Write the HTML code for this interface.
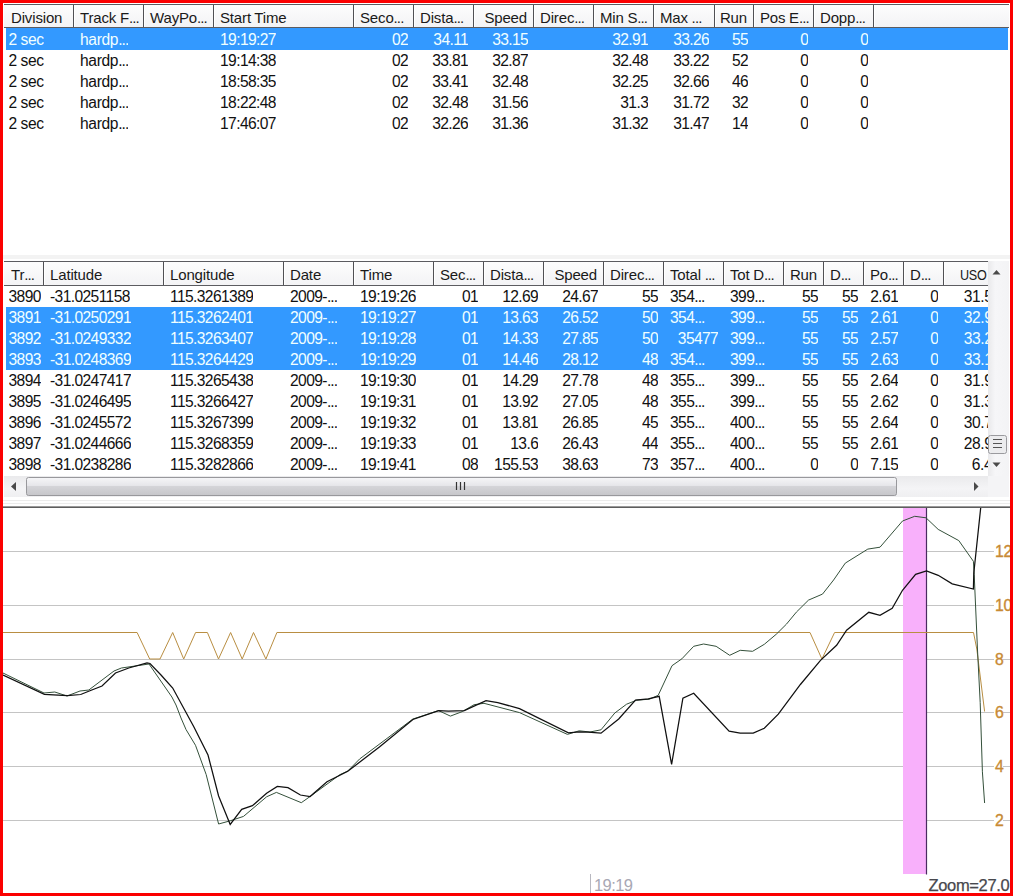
<!DOCTYPE html><html><head><meta charset="utf-8"><style>
*{margin:0;padding:0;box-sizing:border-box}
html,body{width:1013px;height:896px;overflow:hidden;background:#fb0000}
body{position:relative;font-family:"Liberation Sans",sans-serif;font-size:15.6px;color:#111;letter-spacing:-0.35px;word-spacing:-0.3px}
.a{position:absolute}
.c{position:absolute;height:21px;line-height:21px;white-space:nowrap;overflow:hidden}
.h{position:absolute;height:23px;line-height:23px;white-space:nowrap;color:#1a1a1a;font-size:15px;letter-spacing:-0.15px}
.sel{color:#f0ffff}
.n{letter-spacing:-0.6px}
.d{letter-spacing:-0.9px}
</style></head><body>
<div class="a" style="left:3px;top:3px;width:1007px;height:890px;background:#fff"></div>
<div class="a" style="left:4px;top:4px;width:1005px;height:24px;background:linear-gradient(#fdfdfd,#f3f3f5);border-top:1px solid #5c5c60;border-bottom:1px solid #5c5c60"></div>
<div class="a" style="left:73px;top:5px;width:1px;height:22px;background:#505054"></div>
<div class="a" style="left:74px;top:5px;width:1px;height:22px;background:#fff"></div>
<div class="a" style="left:143px;top:5px;width:1px;height:22px;background:#505054"></div>
<div class="a" style="left:144px;top:5px;width:1px;height:22px;background:#fff"></div>
<div class="a" style="left:213px;top:5px;width:1px;height:22px;background:#505054"></div>
<div class="a" style="left:214px;top:5px;width:1px;height:22px;background:#fff"></div>
<div class="a" style="left:353px;top:5px;width:1px;height:22px;background:#505054"></div>
<div class="a" style="left:354px;top:5px;width:1px;height:22px;background:#fff"></div>
<div class="a" style="left:413px;top:5px;width:1px;height:22px;background:#505054"></div>
<div class="a" style="left:414px;top:5px;width:1px;height:22px;background:#fff"></div>
<div class="a" style="left:473px;top:5px;width:1px;height:22px;background:#505054"></div>
<div class="a" style="left:474px;top:5px;width:1px;height:22px;background:#fff"></div>
<div class="a" style="left:533px;top:5px;width:1px;height:22px;background:#505054"></div>
<div class="a" style="left:534px;top:5px;width:1px;height:22px;background:#fff"></div>
<div class="a" style="left:593px;top:5px;width:1px;height:22px;background:#505054"></div>
<div class="a" style="left:594px;top:5px;width:1px;height:22px;background:#fff"></div>
<div class="a" style="left:653px;top:5px;width:1px;height:22px;background:#505054"></div>
<div class="a" style="left:654px;top:5px;width:1px;height:22px;background:#fff"></div>
<div class="a" style="left:714px;top:5px;width:1px;height:22px;background:#505054"></div>
<div class="a" style="left:715px;top:5px;width:1px;height:22px;background:#fff"></div>
<div class="a" style="left:753px;top:5px;width:1px;height:22px;background:#505054"></div>
<div class="a" style="left:754px;top:5px;width:1px;height:22px;background:#fff"></div>
<div class="a" style="left:813px;top:5px;width:1px;height:22px;background:#505054"></div>
<div class="a" style="left:814px;top:5px;width:1px;height:22px;background:#fff"></div>
<div class="a" style="left:873px;top:5px;width:1px;height:22px;background:#505054"></div>
<div class="a" style="left:874px;top:5px;width:1px;height:22px;background:#fff"></div>
<div class="h" style="left:11px;top:5.5px">Division</div>
<div class="h" style="left:80px;top:5.5px">Track F<span class="d">...</span></div>
<div class="h" style="left:150px;top:5.5px">WayPo<span class="d">...</span></div>
<div class="h" style="left:220px;top:5.5px">Start Time</div>
<div class="h" style="left:360px;top:5.5px">Seco<span class="d">...</span></div>
<div class="h" style="left:420px;top:5.5px">Dista<span class="d">...</span></div>
<div class="h" style="right:486px;top:5.5px">Speed</div>
<div class="h" style="left:540px;top:5.5px">Direc<span class="d">...</span></div>
<div class="h" style="left:600px;top:5.5px">Min S<span class="d">...</span></div>
<div class="h" style="left:660px;top:5.5px">Max <span class="d">...</span></div>
<div class="h" style="right:266px;top:5.5px">Run</div>
<div class="h" style="left:760px;top:5.5px">Pos E<span class="d">...</span></div>
<div class="h" style="left:820px;top:5.5px">Dopp<span class="d">...</span></div>
<div class="a" style="left:6px;top:29px;width:1002px;height:21px;background:#3399ff"></div>
<div class="c sel" style="left:8.5px;top:29px">2 sec</div>
<div class="c sel" style="left:80px;top:29px">hardp<span class="d">...</span></div>
<div class="c sel n" style="left:220px;top:29px">19:19:27</div>
<div class="c sel n" style="right:604.8px;top:29px">02</div>
<div class="c sel n" style="right:544.8px;top:29px">34.11</div>
<div class="c sel n" style="right:484.8px;top:29px">33.15</div>
<div class="c sel n" style="right:364.8px;top:29px">32.91</div>
<div class="c sel n" style="right:303.8px;top:29px">33.26</div>
<div class="c sel n" style="right:264.8px;top:29px">55</div>
<div class="c sel n" style="right:204.8px;top:29px">0</div>
<div class="c sel n" style="right:144.8px;top:29px">0</div>
<div class="c" style="left:8.5px;top:50px">2 sec</div>
<div class="c" style="left:80px;top:50px">hardp<span class="d">...</span></div>
<div class="c n" style="left:220px;top:50px">19:14:38</div>
<div class="c n" style="right:604.8px;top:50px">02</div>
<div class="c n" style="right:544.8px;top:50px">33.81</div>
<div class="c n" style="right:484.8px;top:50px">32.87</div>
<div class="c n" style="right:364.8px;top:50px">32.48</div>
<div class="c n" style="right:303.8px;top:50px">33.22</div>
<div class="c n" style="right:264.8px;top:50px">52</div>
<div class="c n" style="right:204.8px;top:50px">0</div>
<div class="c n" style="right:144.8px;top:50px">0</div>
<div class="c" style="left:8.5px;top:71px">2 sec</div>
<div class="c" style="left:80px;top:71px">hardp<span class="d">...</span></div>
<div class="c n" style="left:220px;top:71px">18:58:35</div>
<div class="c n" style="right:604.8px;top:71px">02</div>
<div class="c n" style="right:544.8px;top:71px">33.41</div>
<div class="c n" style="right:484.8px;top:71px">32.48</div>
<div class="c n" style="right:364.8px;top:71px">32.25</div>
<div class="c n" style="right:303.8px;top:71px">32.66</div>
<div class="c n" style="right:264.8px;top:71px">46</div>
<div class="c n" style="right:204.8px;top:71px">0</div>
<div class="c n" style="right:144.8px;top:71px">0</div>
<div class="c" style="left:8.5px;top:92px">2 sec</div>
<div class="c" style="left:80px;top:92px">hardp<span class="d">...</span></div>
<div class="c n" style="left:220px;top:92px">18:22:48</div>
<div class="c n" style="right:604.8px;top:92px">02</div>
<div class="c n" style="right:544.8px;top:92px">32.48</div>
<div class="c n" style="right:484.8px;top:92px">31.56</div>
<div class="c n" style="right:364.8px;top:92px">31.3</div>
<div class="c n" style="right:303.8px;top:92px">31.72</div>
<div class="c n" style="right:264.8px;top:92px">32</div>
<div class="c n" style="right:204.8px;top:92px">0</div>
<div class="c n" style="right:144.8px;top:92px">0</div>
<div class="c" style="left:8.5px;top:113px">2 sec</div>
<div class="c" style="left:80px;top:113px">hardp<span class="d">...</span></div>
<div class="c n" style="left:220px;top:113px">17:46:07</div>
<div class="c n" style="right:604.8px;top:113px">02</div>
<div class="c n" style="right:544.8px;top:113px">32.26</div>
<div class="c n" style="right:484.8px;top:113px">31.36</div>
<div class="c n" style="right:364.8px;top:113px">31.32</div>
<div class="c n" style="right:303.8px;top:113px">31.47</div>
<div class="c n" style="right:264.8px;top:113px">14</div>
<div class="c n" style="right:204.8px;top:113px">0</div>
<div class="c n" style="right:144.8px;top:113px">0</div>
<div class="a" style="left:6px;top:28px;width:1002px;height:1px;background:#3399ff"></div>
<div class="a" style="left:3px;top:255px;width:1007px;height:4px;background:#f3f3f3"></div>
<div class="a" style="left:4px;top:261px;width:984px;height:25px;background:linear-gradient(#fdfdfd,#f3f3f5);border-top:1px solid #5c5c60;border-bottom:1px solid #5c5c60"></div>
<div class="a" style="left:43px;top:262px;width:1px;height:23px;background:#505054"></div>
<div class="a" style="left:44px;top:262px;width:1px;height:23px;background:#fff"></div>
<div class="a" style="left:163px;top:262px;width:1px;height:23px;background:#505054"></div>
<div class="a" style="left:164px;top:262px;width:1px;height:23px;background:#fff"></div>
<div class="a" style="left:283px;top:262px;width:1px;height:23px;background:#505054"></div>
<div class="a" style="left:284px;top:262px;width:1px;height:23px;background:#fff"></div>
<div class="a" style="left:353px;top:262px;width:1px;height:23px;background:#505054"></div>
<div class="a" style="left:354px;top:262px;width:1px;height:23px;background:#fff"></div>
<div class="a" style="left:433px;top:262px;width:1px;height:23px;background:#505054"></div>
<div class="a" style="left:434px;top:262px;width:1px;height:23px;background:#fff"></div>
<div class="a" style="left:483px;top:262px;width:1px;height:23px;background:#505054"></div>
<div class="a" style="left:484px;top:262px;width:1px;height:23px;background:#fff"></div>
<div class="a" style="left:543px;top:262px;width:1px;height:23px;background:#505054"></div>
<div class="a" style="left:544px;top:262px;width:1px;height:23px;background:#fff"></div>
<div class="a" style="left:603px;top:262px;width:1px;height:23px;background:#505054"></div>
<div class="a" style="left:604px;top:262px;width:1px;height:23px;background:#fff"></div>
<div class="a" style="left:663px;top:262px;width:1px;height:23px;background:#505054"></div>
<div class="a" style="left:664px;top:262px;width:1px;height:23px;background:#fff"></div>
<div class="a" style="left:723px;top:262px;width:1px;height:23px;background:#505054"></div>
<div class="a" style="left:724px;top:262px;width:1px;height:23px;background:#fff"></div>
<div class="a" style="left:783px;top:262px;width:1px;height:23px;background:#505054"></div>
<div class="a" style="left:784px;top:262px;width:1px;height:23px;background:#fff"></div>
<div class="a" style="left:823px;top:262px;width:1px;height:23px;background:#505054"></div>
<div class="a" style="left:824px;top:262px;width:1px;height:23px;background:#fff"></div>
<div class="a" style="left:863px;top:262px;width:1px;height:23px;background:#505054"></div>
<div class="a" style="left:864px;top:262px;width:1px;height:23px;background:#fff"></div>
<div class="a" style="left:903px;top:262px;width:1px;height:23px;background:#505054"></div>
<div class="a" style="left:904px;top:262px;width:1px;height:23px;background:#fff"></div>
<div class="a" style="left:943px;top:262px;width:1px;height:23px;background:#505054"></div>
<div class="a" style="left:944px;top:262px;width:1px;height:23px;background:#fff"></div>
<div class="h" style="left:11px;top:262.5px">Tr<span class="d">...</span></div>
<div class="h" style="left:50px;top:262.5px">Latitude</div>
<div class="h" style="left:170px;top:262.5px">Longitude</div>
<div class="h" style="left:290px;top:262.5px">Date</div>
<div class="h" style="left:360px;top:262.5px">Time</div>
<div class="h" style="left:440px;top:262.5px">Sec<span class="d">...</span></div>
<div class="h" style="left:490px;top:262.5px">Dista<span class="d">...</span></div>
<div class="h" style="right:416px;top:262.5px">Speed</div>
<div class="h" style="left:610px;top:262.5px">Direc<span class="d">...</span></div>
<div class="h" style="left:670px;top:262.5px">Total <span class="d">...</span></div>
<div class="h" style="left:730px;top:262.5px">Tot D<span class="d">...</span></div>
<div class="h" style="right:196px;top:262.5px">Run</div>
<div class="h" style="left:830px;top:262.5px">D<span class="d">...</span></div>
<div class="h" style="left:870px;top:262.5px">Po<span class="d">...</span></div>
<div class="h" style="left:910px;top:262.5px">D<span class="d">...</span></div>
<div class="h" style="left:960px;top:262.5px;transform:scaleX(0.84);transform-origin:0 0;letter-spacing:-0.3px">USO</div>
<div class="c n" style="left:8.5px;top:286px">3890</div>
<div class="c n" style="left:50px;top:286px">-31.0251158</div>
<div class="c n" style="left:170px;top:286px">115.3261389</div>
<div class="c n" style="left:290px;top:286px">2009-<span class="d">...</span></div>
<div class="c n" style="left:360px;top:286px">19:19:26</div>
<div class="c n" style="right:534.8px;top:286px">01</div>
<div class="c n" style="right:474.8px;top:286px">12.69</div>
<div class="c n" style="right:414.8px;top:286px">24.67</div>
<div class="c n" style="right:354.8px;top:286px">55</div>
<div class="c n" style="left:670px;top:286px">354<span class="d">...</span></div>
<div class="c n" style="left:730px;top:286px">399<span class="d">...</span></div>
<div class="c n" style="right:194.8px;top:286px">55</div>
<div class="c n" style="right:154.8px;top:286px">55</div>
<div class="c n" style="right:114.8px;top:286px">2.61</div>
<div class="c n" style="right:74.8px;top:286px">0</div>
<div class="a" style="left:6px;top:307px;width:982px;height:21px;background:#3399ff"></div>
<div class="c sel n" style="left:8.5px;top:307px">3891</div>
<div class="c sel n" style="left:50px;top:307px">-31.0250291</div>
<div class="c sel n" style="left:170px;top:307px">115.3262401</div>
<div class="c sel n" style="left:290px;top:307px">2009-<span class="d">...</span></div>
<div class="c sel n" style="left:360px;top:307px">19:19:27</div>
<div class="c sel n" style="right:534.8px;top:307px">01</div>
<div class="c sel n" style="right:474.8px;top:307px">13.63</div>
<div class="c sel n" style="right:414.8px;top:307px">26.52</div>
<div class="c sel n" style="right:354.8px;top:307px">50</div>
<div class="c sel n" style="left:670px;top:307px">354<span class="d">...</span></div>
<div class="c sel n" style="left:730px;top:307px">399<span class="d">...</span></div>
<div class="c sel n" style="right:194.8px;top:307px">55</div>
<div class="c sel n" style="right:154.8px;top:307px">55</div>
<div class="c sel n" style="right:114.8px;top:307px">2.61</div>
<div class="c sel n" style="right:74.8px;top:307px">0</div>
<div class="a" style="left:6px;top:328px;width:982px;height:21px;background:#3399ff"></div>
<div class="c sel n" style="left:8.5px;top:328px">3892</div>
<div class="c sel n" style="left:50px;top:328px">-31.0249332</div>
<div class="c sel n" style="left:170px;top:328px">115.3263407</div>
<div class="c sel n" style="left:290px;top:328px">2009-<span class="d">...</span></div>
<div class="c sel n" style="left:360px;top:328px">19:19:28</div>
<div class="c sel n" style="right:534.8px;top:328px">01</div>
<div class="c sel n" style="right:474.8px;top:328px">14.33</div>
<div class="c sel n" style="right:414.8px;top:328px">27.85</div>
<div class="c sel n" style="right:354.8px;top:328px">50</div>
<div class="c sel n" style="right:294.8px;top:328px">35477</div>
<div class="c sel n" style="left:730px;top:328px">399<span class="d">...</span></div>
<div class="c sel n" style="right:194.8px;top:328px">55</div>
<div class="c sel n" style="right:154.8px;top:328px">55</div>
<div class="c sel n" style="right:114.8px;top:328px">2.57</div>
<div class="c sel n" style="right:74.8px;top:328px">0</div>
<div class="a" style="left:6px;top:349px;width:982px;height:21px;background:#3399ff"></div>
<div class="c sel n" style="left:8.5px;top:349px">3893</div>
<div class="c sel n" style="left:50px;top:349px">-31.0248369</div>
<div class="c sel n" style="left:170px;top:349px">115.3264429</div>
<div class="c sel n" style="left:290px;top:349px">2009-<span class="d">...</span></div>
<div class="c sel n" style="left:360px;top:349px">19:19:29</div>
<div class="c sel n" style="right:534.8px;top:349px">01</div>
<div class="c sel n" style="right:474.8px;top:349px">14.46</div>
<div class="c sel n" style="right:414.8px;top:349px">28.12</div>
<div class="c sel n" style="right:354.8px;top:349px">48</div>
<div class="c sel n" style="left:670px;top:349px">354<span class="d">...</span></div>
<div class="c sel n" style="left:730px;top:349px">399<span class="d">...</span></div>
<div class="c sel n" style="right:194.8px;top:349px">55</div>
<div class="c sel n" style="right:154.8px;top:349px">55</div>
<div class="c sel n" style="right:114.8px;top:349px">2.63</div>
<div class="c sel n" style="right:74.8px;top:349px">0</div>
<div class="c n" style="left:8.5px;top:370px">3894</div>
<div class="c n" style="left:50px;top:370px">-31.0247417</div>
<div class="c n" style="left:170px;top:370px">115.3265438</div>
<div class="c n" style="left:290px;top:370px">2009-<span class="d">...</span></div>
<div class="c n" style="left:360px;top:370px">19:19:30</div>
<div class="c n" style="right:534.8px;top:370px">01</div>
<div class="c n" style="right:474.8px;top:370px">14.29</div>
<div class="c n" style="right:414.8px;top:370px">27.78</div>
<div class="c n" style="right:354.8px;top:370px">48</div>
<div class="c n" style="left:670px;top:370px">355<span class="d">...</span></div>
<div class="c n" style="left:730px;top:370px">399<span class="d">...</span></div>
<div class="c n" style="right:194.8px;top:370px">55</div>
<div class="c n" style="right:154.8px;top:370px">55</div>
<div class="c n" style="right:114.8px;top:370px">2.64</div>
<div class="c n" style="right:74.8px;top:370px">0</div>
<div class="c n" style="left:8.5px;top:391px">3895</div>
<div class="c n" style="left:50px;top:391px">-31.0246495</div>
<div class="c n" style="left:170px;top:391px">115.3266427</div>
<div class="c n" style="left:290px;top:391px">2009-<span class="d">...</span></div>
<div class="c n" style="left:360px;top:391px">19:19:31</div>
<div class="c n" style="right:534.8px;top:391px">01</div>
<div class="c n" style="right:474.8px;top:391px">13.92</div>
<div class="c n" style="right:414.8px;top:391px">27.05</div>
<div class="c n" style="right:354.8px;top:391px">48</div>
<div class="c n" style="left:670px;top:391px">355<span class="d">...</span></div>
<div class="c n" style="left:730px;top:391px">399<span class="d">...</span></div>
<div class="c n" style="right:194.8px;top:391px">55</div>
<div class="c n" style="right:154.8px;top:391px">55</div>
<div class="c n" style="right:114.8px;top:391px">2.62</div>
<div class="c n" style="right:74.8px;top:391px">0</div>
<div class="c n" style="left:8.5px;top:412px">3896</div>
<div class="c n" style="left:50px;top:412px">-31.0245572</div>
<div class="c n" style="left:170px;top:412px">115.3267399</div>
<div class="c n" style="left:290px;top:412px">2009-<span class="d">...</span></div>
<div class="c n" style="left:360px;top:412px">19:19:32</div>
<div class="c n" style="right:534.8px;top:412px">01</div>
<div class="c n" style="right:474.8px;top:412px">13.81</div>
<div class="c n" style="right:414.8px;top:412px">26.85</div>
<div class="c n" style="right:354.8px;top:412px">45</div>
<div class="c n" style="left:670px;top:412px">355<span class="d">...</span></div>
<div class="c n" style="left:730px;top:412px">400<span class="d">...</span></div>
<div class="c n" style="right:194.8px;top:412px">55</div>
<div class="c n" style="right:154.8px;top:412px">55</div>
<div class="c n" style="right:114.8px;top:412px">2.64</div>
<div class="c n" style="right:74.8px;top:412px">0</div>
<div class="c n" style="left:8.5px;top:433px">3897</div>
<div class="c n" style="left:50px;top:433px">-31.0244666</div>
<div class="c n" style="left:170px;top:433px">115.3268359</div>
<div class="c n" style="left:290px;top:433px">2009-<span class="d">...</span></div>
<div class="c n" style="left:360px;top:433px">19:19:33</div>
<div class="c n" style="right:534.8px;top:433px">01</div>
<div class="c n" style="right:474.8px;top:433px">13.6</div>
<div class="c n" style="right:414.8px;top:433px">26.43</div>
<div class="c n" style="right:354.8px;top:433px">44</div>
<div class="c n" style="left:670px;top:433px">355<span class="d">...</span></div>
<div class="c n" style="left:730px;top:433px">400<span class="d">...</span></div>
<div class="c n" style="right:194.8px;top:433px">55</div>
<div class="c n" style="right:154.8px;top:433px">55</div>
<div class="c n" style="right:114.8px;top:433px">2.61</div>
<div class="c n" style="right:74.8px;top:433px">0</div>
<div class="c n" style="left:8.5px;top:454px">3898</div>
<div class="c n" style="left:50px;top:454px">-31.0238286</div>
<div class="c n" style="left:170px;top:454px">115.3282866</div>
<div class="c n" style="left:290px;top:454px">2009-<span class="d">...</span></div>
<div class="c n" style="left:360px;top:454px">19:19:41</div>
<div class="c n" style="right:534.8px;top:454px">08</div>
<div class="c n" style="right:474.8px;top:454px">155.53</div>
<div class="c n" style="right:414.8px;top:454px">38.63</div>
<div class="c n" style="right:354.8px;top:454px">73</div>
<div class="c n" style="left:670px;top:454px">357<span class="d">...</span></div>
<div class="c n" style="left:730px;top:454px">400<span class="d">...</span></div>
<div class="c n" style="right:194.8px;top:454px">0</div>
<div class="c n" style="right:154.8px;top:454px">0</div>
<div class="c n" style="right:114.8px;top:454px">7.15</div>
<div class="c n" style="right:74.8px;top:454px">0</div>
<div class="a" style="left:943px;top:286px;width:45px;height:189px;overflow:hidden">
<div class="c" style="left:20.7px;top:0px">31.58</div>
<div class="c sel" style="left:20.7px;top:21px">32.94</div>
<div class="c sel" style="left:20.7px;top:42px">33.27</div>
<div class="c sel" style="left:20.7px;top:63px">33.15</div>
<div class="c" style="left:20.7px;top:84px">31.93</div>
<div class="c" style="left:20.7px;top:105px">31.35</div>
<div class="c" style="left:20.7px;top:126px">30.75</div>
<div class="c" style="left:20.7px;top:147px">28.95</div>
<div class="c" style="left:28.7px;top:168px">6.45</div>
</div>
<div class="a" style="left:988px;top:261px;width:21px;height:215px;background:linear-gradient(90deg,#e9e9eb,#f6f6f8 35%,#f3f3f5)"></div>
<svg class="a" style="left:988px;top:261px" width="21" height="215"><path d="M4.5 13.5 L8.5 9 L12.5 13.5 Z" fill="#4a4a4a"/><path d="M4.5 201.5 L8.5 206 L12.5 201.5 Z" fill="#4a4a4a"/><rect x="0.5" y="174.5" width="18" height="18" rx="2" fill="#ececee" stroke="#9a9a9e"/><path d="M5 178.5h9M5 182.5h9M5 186.5h9" stroke="#555" stroke-width="1.2"/></svg>
<div class="a" style="left:4px;top:476px;width:984px;height:21px;background:linear-gradient(#eaeaec,#f4f4f6 60%,#efeff1)"></div>
<svg class="a" style="left:4px;top:476px" width="984" height="21"><path d="M7 10.5 L12 6 L12 15 Z" fill="#4a4a4a"/><path d="M7.5 6 L12.5 10.5 L7.5 15 Z" fill="#fff" opacity="0"/><path d="M970 6 L974.5 10.5 L970 15 Z" fill="#4a4a4a"/><rect x="22.5" y="1.5" width="870" height="18" rx="2" fill="url(#g1)" stroke="#98989c"/><defs><linearGradient id="g1" x1="0" y1="0" x2="0" y2="1"><stop offset="0" stop-color="#f6f6f8"/><stop offset="0.45" stop-color="#e6e6ea"/><stop offset="0.5" stop-color="#d4d4d8"/><stop offset="1" stop-color="#c6c6ca"/></defs><path d="M452.5 6v8M456.5 6v8M460.5 6v8" stroke="#333" stroke-width="1.2"/></svg>
<div class="a" style="left:988px;top:476px;width:21px;height:21px;background:#f4f4f6"></div>
<div class="a" style="left:3px;top:500px;width:1007px;height:1px;background:#ececec"></div>
<div class="a" style="left:3px;top:503px;width:1007px;height:1px;background:#ececec"></div>
<div class="a" style="left:3px;top:506px;width:1007px;height:1px;background:#9a9a9a"></div>
<div class="a" style="left:3px;top:507px;width:1007px;height:1px;background:#5e5e5e"></div>
<svg class="a" style="left:0;top:0" width="1013" height="896">
<defs><clipPath id="cc"><rect x="3" y="508" width="1007" height="385"/></clipPath></defs>
<g clip-path="url(#cc)">
<line x1="3" y1="551.5" x2="1010" y2="551.5" stroke="#c4c4c4" stroke-width="1"/>
<line x1="3" y1="605.5" x2="1010" y2="605.5" stroke="#c4c4c4" stroke-width="1"/>
<line x1="3" y1="659.5" x2="1010" y2="659.5" stroke="#c4c4c4" stroke-width="1"/>
<line x1="3" y1="712.5" x2="1010" y2="712.5" stroke="#c4c4c4" stroke-width="1"/>
<line x1="3" y1="766.5" x2="1010" y2="766.5" stroke="#c4c4c4" stroke-width="1"/>
<line x1="3" y1="820.5" x2="1010" y2="820.5" stroke="#c4c4c4" stroke-width="1"/>
<rect x="903" y="508" width="23" height="366" fill="#f8b0fb"/>
<line x1="926.5" y1="508" x2="926.5" y2="874.5" stroke="#4a2a60" stroke-width="1.2"/>
<polyline points="3,632.5 137.1,632.5 149.7,659 160,659 172.7,632.5 183.7,659 195.6,632.5 207.4,632.5 218.5,659 230.6,632.5 242.2,659 253.5,632.5 265.9,659 276.9,632.5 810,632.5 821.9,659 834.6,632.5 973.5,632.5 976.8,649 984.6,711.5" fill="none" stroke="#b98e42" stroke-width="1"/>
<polyline points="3,673 44,693 54.8,692 67,696 80,691 88.8,690 114,671 121.4,668 149,664 171.9,697 176,705 181,718 186,729.5 195.5,745.3 206.2,774.6 218.6,824 230.2,820.8 243.5,816.4 266.6,796.8 276.4,792.4 301.3,802.7 310.1,796.5 340,774.6 347.8,771 359.6,759 412.9,719 438.6,710.6 450.4,716.1 462.3,711.6 474.1,704.7 484,703.3 519.5,712.6 567.4,734.4 579.2,730.8 590,732 601,729.8 614.8,713 626.6,704.2 636.5,700.2 649.3,699.2 658.2,695.3 672,665.7 681.9,658.8 693.7,646.3 703.6,644 716.1,646.3 729.7,655.3 740.2,650.3 752.6,651.3 764.3,644.3 776.3,634.2 786.4,624.2 796.4,612.1 808.5,600.1 822.5,594.1 833.6,580 845.3,563.1 867.8,549.1 880,547.2 902.5,521 914.7,516.3 926,517.8 938.2,529.4 958.8,540.6 973.4,561.3 974.2,574.4 977.5,650 980.2,702.6 982.4,771.8 984.6,803" fill="none" stroke="#34503a" stroke-width="1"/>
<polyline points="3,675 44.4,694.4 67.4,695.5 80.7,694.5 91.8,690 102,686 115.5,673 128.8,668 147,663 150,663.5 161,675 172.7,688 193.8,726.7 208,755 218.6,796 230.2,824.4 241.7,809.3 252.4,805.7 266.6,793.3 277.3,786.5 288,787.6 300.4,795 310.1,796.5 327,781.7 347.8,771.2 379.4,747.1 412.9,719.5 438.6,710.6 448.5,711.2 464.3,710.6 486,700.7 497.8,702.7 519.5,708.6 568.4,732.8 579.2,731.8 588.1,732.2 601,733.2 618.7,719 635.5,700.2 648.3,698.8 659.2,696.3 671.6,764.4 682.9,698.2 693.7,693.3 729.1,731.1 740.2,733.1 753.2,733.1 764.3,728.3 778.3,714.2 800.4,684.5 820.5,660.4 836.6,645.3 846.6,630.2 868.8,612.3 880,615.3 892.2,608.2 902.5,590.3 915.6,574.4 926.5,571 938.2,575.3 952.2,583.8 973.4,589 973.8,573 981,505" fill="none" stroke="#101010" stroke-width="1.25"/>
<rect x="994" y="544.5" width="16" height="14" fill="#fff"/>
<text x="994.9" y="557.4" font-family="Liberation Sans" font-size="15.8" letter-spacing="-0.3" fill="#c88a34" stroke="#c88a34" stroke-width="0.35">12</text>
<rect x="994" y="598.5" width="16" height="14" fill="#fff"/>
<text x="994.9" y="611.4" font-family="Liberation Sans" font-size="15.8" letter-spacing="-0.3" fill="#c88a34" stroke="#c88a34" stroke-width="0.35">10</text>
<rect x="994" y="652.5" width="9" height="14" fill="#fff"/>
<text x="994.9" y="665.4" font-family="Liberation Sans" font-size="15.8" letter-spacing="-0.3" fill="#c88a34" stroke="#c88a34" stroke-width="0.35">8</text>
<rect x="994" y="705.5" width="9" height="14" fill="#fff"/>
<text x="994.9" y="718.4" font-family="Liberation Sans" font-size="15.8" letter-spacing="-0.3" fill="#c88a34" stroke="#c88a34" stroke-width="0.35">6</text>
<rect x="994" y="759.5" width="9" height="14" fill="#fff"/>
<text x="994.9" y="772.4" font-family="Liberation Sans" font-size="15.8" letter-spacing="-0.3" fill="#c88a34" stroke="#c88a34" stroke-width="0.35">4</text>
<rect x="994" y="813.5" width="9" height="14" fill="#fff"/>
<text x="994.9" y="826.4" font-family="Liberation Sans" font-size="15.8" letter-spacing="-0.3" fill="#c88a34" stroke="#c88a34" stroke-width="0.35">2</text>
<line x1="590.5" y1="874" x2="590.5" y2="893" stroke="#b8b8c0" stroke-width="1"/>
<text x="594" y="891" font-family="Liberation Sans" font-size="16.5" letter-spacing="-0.6" fill="#a8a8b4">19:19</text>
<text x="928.5" y="891" font-family="Liberation Sans" font-size="16.5" fill="#48484e" stroke="#48484e" stroke-width="0.25">Zoom=27.0</text>
</g></svg>
</body></html>
